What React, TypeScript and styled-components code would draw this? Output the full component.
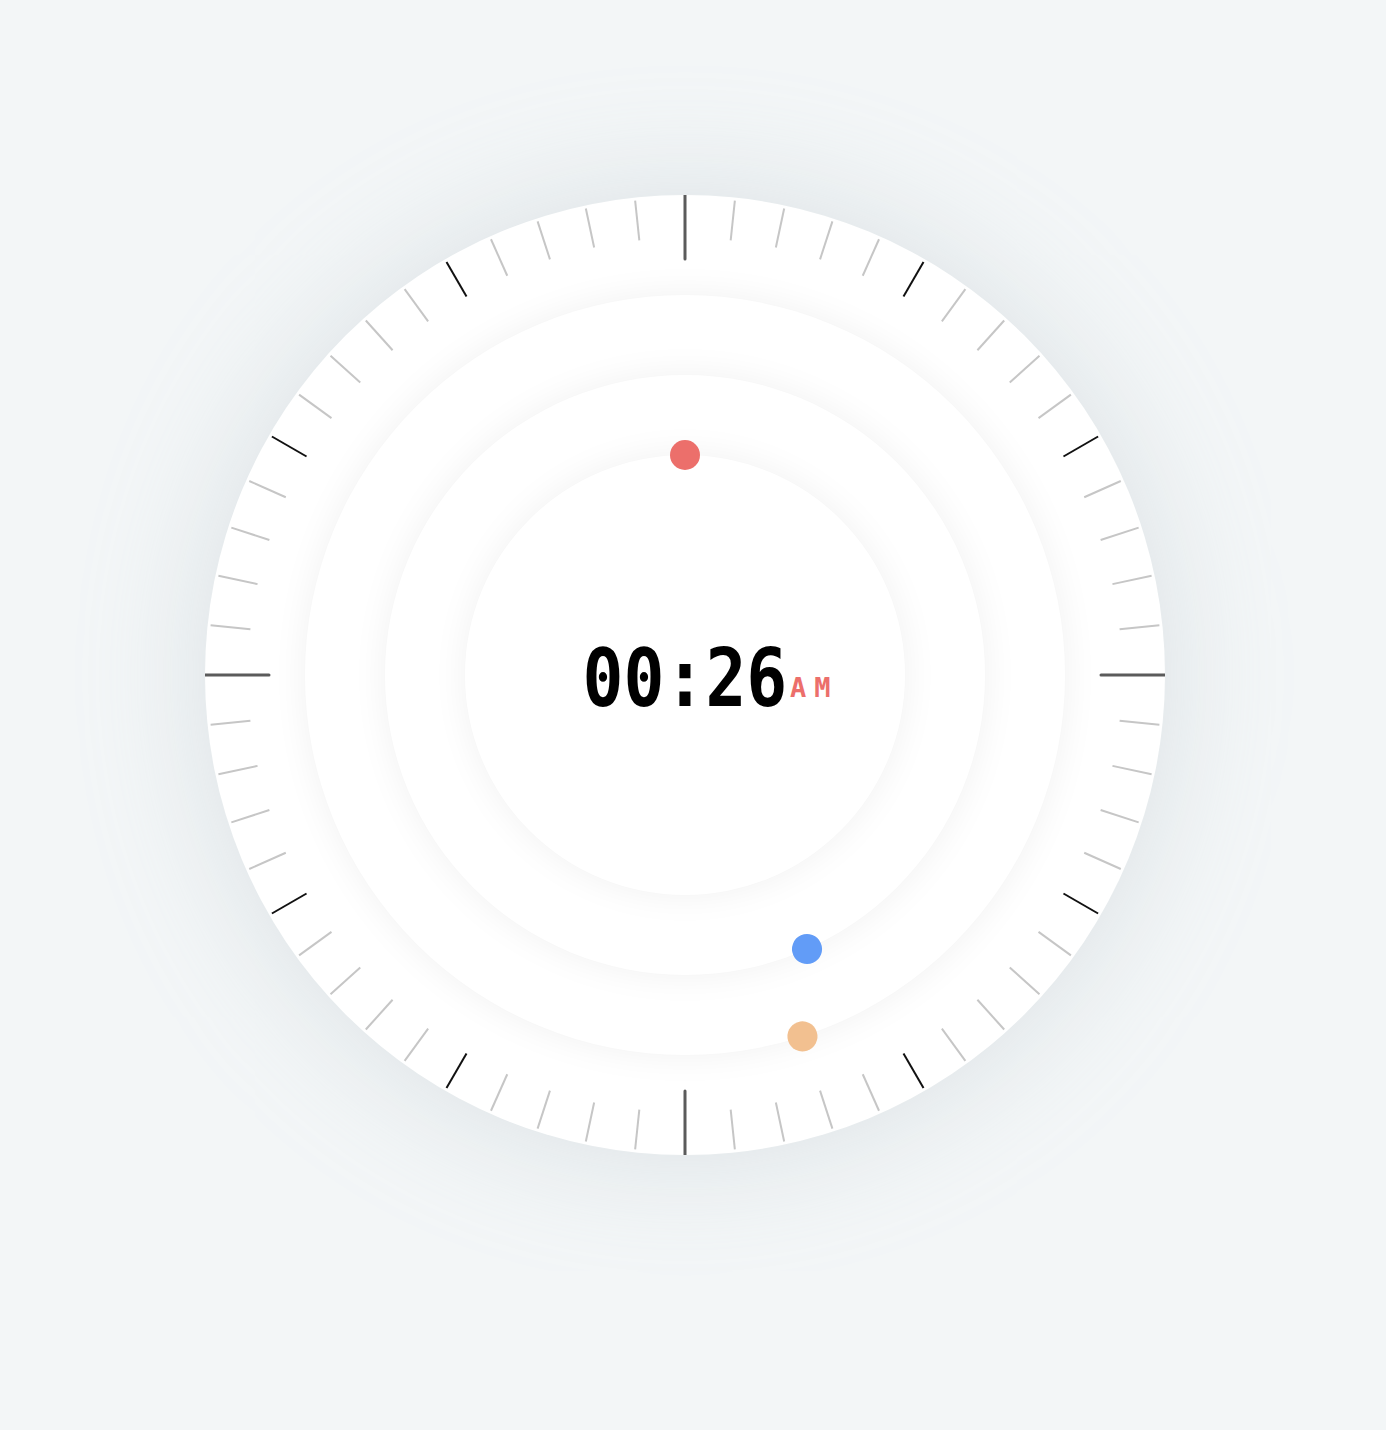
import styled, { createGlobalStyle } from "styled-components";

const GlobalStyle = createGlobalStyle`
   html, body {
      margin: 0;
      padding: 0;
      background: #f3f6f7;
   }
`

const StyledPage = styled.div`
   min-height: 1430px;
   box-sizing: border-box;
   display: flex;
   justify-content: center;
   align-items: flex-start;
   padding: 195px 16px 0 0;
   background: #f3f6f7;
`

const StyledFace = styled.div`
   position: relative;
   width: 960px;
   height: 960px;
   border-radius: 50%;
   background: #ffffff;
   box-shadow: 0 0 120px rgba(185, 198, 205, 0.42);
   display: flex;
   align-items: center;
   justify-content: center;
`

const StyledRing = styled.div<{ size: number }>`
   position: relative;
   width: ${(props) => props.size}px;
   height: ${(props) => props.size}px;
   border-radius: 50%;
   background: #ffffff;
   box-shadow: 0 0 36px rgba(0, 0, 0, 0.06);
   display: flex;
   align-items: center;
   justify-content: center;
`

const StyledTicks = styled.svg`
   position: absolute;
   inset: 0;
   width: 960px;
   height: 960px;
   pointer-events: none;
`

const StyledHand = styled.div`
   position: absolute;
   inset: 0;
   z-index: 2;
   pointer-events: none;
`

const StyledDot = styled.span<{ color: string }>`
   position: absolute;
   top: -15px;
   left: 50%;
   width: 30px;
   height: 30px;
   margin-left: -15px;
   border-radius: 50%;
   background: ${(props) => props.color};
`

const StyledTime = styled.div`
   position: relative;
   margin-top: 6px;
   font-family: "DejaVu Sans Mono", "Liberation Mono", monospace;
   font-weight: 700;
   color: #000000;
`

const StyledDigits = styled.span`
   display: block;
   font-size: 81px;
   line-height: 1;
   transform: scaleX(0.84);
`

const StyledMeridiem = styled.span`
   position: absolute;
   left: calc(50% + 105px);
   bottom: 18px;
   font-size: 27px;
   line-height: 1;
   letter-spacing: 8px;
   color: #ec6f6b;
`

const hours = 0
const minutes = 26
const seconds = 27

const Ticks = () => {
   const c = 480
   const lines = []
   for (let i = 0; i < 60; i++) {
      const a = (i * 6 * Math.PI) / 180
      const major = i % 15 === 0
      const hour = i % 5 === 0
      const r1 = major ? 480 : 477
      const r2 = major ? 416 : 437
      lines.push(
         <line
            key={i}
            x1={c + Math.sin(a) * r1}
            y1={c - Math.cos(a) * r1}
            x2={c + Math.sin(a) * r2}
            y2={c - Math.cos(a) * r2}
            stroke={major ? "#5b5b5b" : hour ? "#111111" : "#c6c6c6"}
            strokeWidth={major ? 3 : 2}
            strokeLinecap={major ? "round" : "butt"}
         />
      )
   }
   return <StyledTicks viewBox="0 0 960 960">{lines}</StyledTicks>
}

const App = () => {
   const hourAngle = (hours % 12) * 30
   const minuteAngle = minutes * 6
   const secondAngle = seconds * 6

   return (
      <StyledPage>
         <GlobalStyle />
         <StyledFace>
            <Ticks />
            <StyledRing size={760}>
               <StyledRing size={600}>
                  <StyledRing size={440}>
                     <StyledTime>
                        <StyledDigits>00:26</StyledDigits>
                        <StyledMeridiem>AM</StyledMeridiem>
                     </StyledTime>
                     <StyledHand style={{ transform: `rotate(${hourAngle}deg)` }}>
                        <StyledDot color="#ec6f6b" />
                     </StyledHand>
                  </StyledRing>
                  <StyledHand style={{ transform: `rotate(${minuteAngle}deg)` }}>
                     <StyledDot color="#629cf7" />
                  </StyledHand>
               </StyledRing>
               <StyledHand style={{ transform: `rotate(${secondAngle}deg)` }}>
                  <StyledDot color="#f2c090" />
               </StyledHand>
            </StyledRing>
         </StyledFace>
      </StyledPage>
   )
}

export default App;
